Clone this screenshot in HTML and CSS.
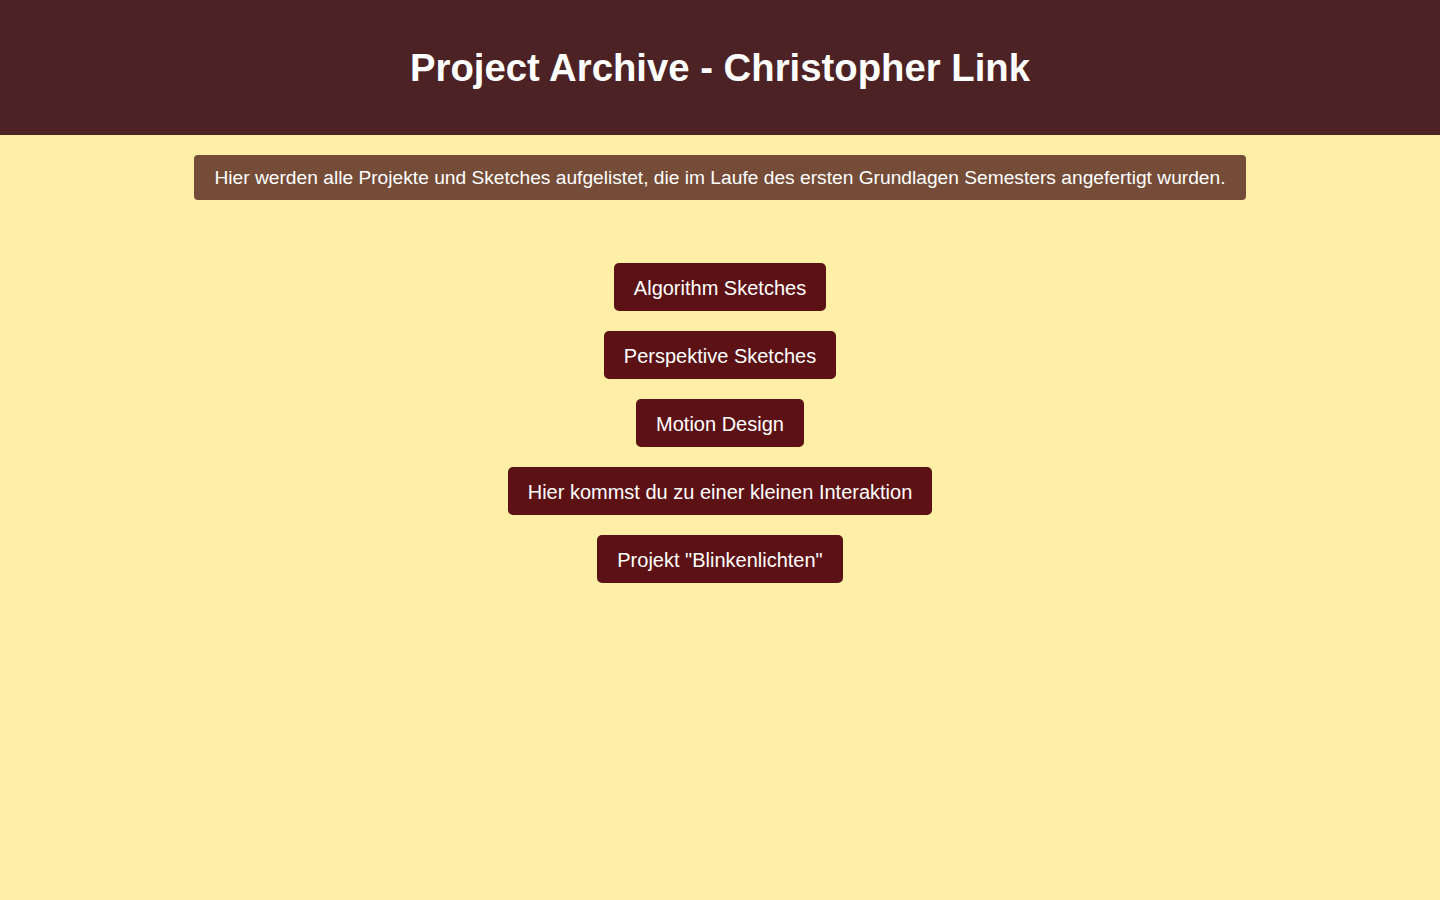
FILE: index.html
```html
<!DOCTYPE html>
<html lang="de">
<head>
<meta charset="utf-8">
<title>Project Archive - Christopher Link</title>
<link rel="stylesheet" href="styles.css">
</head>
<body>
<header class="site-header">
  <h1 class="title">Project Archive - Christopher Link</h1>
</header>
<main class="content">
  <p class="intro">Hier werden alle Projekte und Sketches aufgelistet, die im Laufe des ersten Grundlagen Semesters angefertigt wurden.</p>
  <nav class="links">
    <a class="btn" href="#">Algorithm Sketches</a>
    <a class="btn" href="#">Perspektive Sketches</a>
    <a class="btn" href="#">Motion Design</a>
    <a class="btn" href="#">Hier kommst du zu einer kleinen Interaktion</a>
    <a class="btn" href="#">Projekt "Blinkenlichten"</a>
  </nav>
</main>
</body>
</html>
```
FILE: styles.css
```css
* { box-sizing: border-box; }
html, body {
  margin: 0;
  padding: 0;
  background: #ffeea6;
  font-family: "Liberation Sans", Arial, sans-serif;
  min-height: 100%;
}
.site-header {
  background: #4d2224;
  height: 135px;
  display: flex;
  align-items: center;
  justify-content: center;
  padding-top: 2px;
}
.title {
  margin: 0;
  color: #fff;
  font-size: 38.3px;
  font-weight: bold;
  line-height: 1;
}
.content {
  display: flex;
  flex-direction: column;
  align-items: center;
  padding-top: 20px;
}
.intro {
  margin: 0;
  background: #754c37;
  color: #fff;
  font-size: 19.2px;
  line-height: 22px;
  padding: 11.5px 20px;
  border-radius: 4px;
}
.links {
  display: flex;
  flex-direction: column;
  align-items: center;
  gap: 20px;
  margin-top: 63px;
}
.btn {
  display: block;
  background: #5c1214;
  color: #fff;
  text-decoration: none;
  font-size: 20px;
  line-height: 24px;
  padding: 13px 20px 11px;
  border-radius: 5px;
}
```
